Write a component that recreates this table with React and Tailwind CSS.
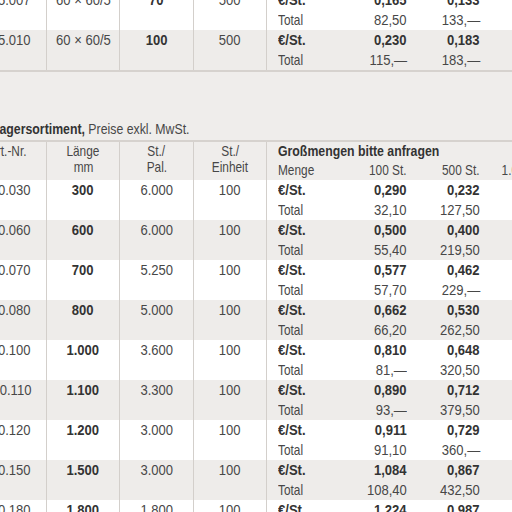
import React from "react";

const font = { fontFamily: "'Liberation Sans', Arial, sans-serif" };

const topRows = [
  { nr: "5.007", len: "60 × 60/5", pal: "70", unit: "500", p1: "0,165", p2: "0,133", t1: "82,50", t2: "133,—" },
  { nr: "5.010", len: "60 × 60/5", pal: "100", unit: "500", p1: "0,230", p2: "0,183", t1: "115,—", t2: "183,—" },
];

const rows = [
  { nr: "0.030", len: "300", pal: "6.000", unit: "100", p1: "0,290", p2: "0,232", t1: "32,10", t2: "127,50" },
  { nr: "0.060", len: "600", pal: "6.000", unit: "100", p1: "0,500", p2: "0,400", t1: "55,40", t2: "219,50" },
  { nr: "0.070", len: "700", pal: "5.250", unit: "100", p1: "0,577", p2: "0,462", t1: "57,70", t2: "229,—" },
  { nr: "0.080", len: "800", pal: "5.000", unit: "100", p1: "0,662", p2: "0,530", t1: "66,20", t2: "262,50" },
  { nr: "0.100", len: "1.000", pal: "3.600", unit: "100", p1: "0,810", p2: "0,648", t1: "81,—", t2: "320,50" },
  { nr: "0.110", len: "1.100", pal: "3.300", unit: "100", p1: "0,890", p2: "0,712", t1: "93,—", t2: "379,50" },
  { nr: "0.120", len: "1.200", pal: "3.000", unit: "100", p1: "0,911", p2: "0,729", t1: "91,10", t2: "360,—" },
  { nr: "0.150", len: "1.500", pal: "3.000", unit: "100", p1: "1,084", p2: "0,867", t1: "108,40", t2: "432,50" },
  { nr: "0.180", len: "1.800", pal: "1.800", unit: "100", p1: "1,224", p2: "0,987", t1: "122,40", t2: "493,50" },
];

// condensed look: Arial squeezed sideways (numbers a bit wider than words)
function T({ a = "l", n, h, children }) {
  const origin = a === "r" ? "origin-right" : a === "c" ? "origin-center" : "origin-left";
  const sx = n ? "scale-x-[0.87]" : h ? "scale-x-[0.82]" : "scale-x-[0.79]";
  return <span className={`inline-block whitespace-nowrap ${sx} ${origin}`}>{children}</span>;
}

function PriceBlock({ p1, p2, t1, t2 }) {
  return (
    <div className="flex flex-col">
      <div className="flex font-bold text-[#333]">
        <div className="w-[67px] pl-[11px]"><T n>€/St.</T></div>
        <div className="w-[73px] text-right"><T a="r" n>{p1}</T></div>
        <div className="w-[73px] text-right"><T a="r" n>{p2}</T></div>
      </div>
      <div className="flex">
        <div className="w-[67px] pl-[11px]"><T>Total</T></div>
        <div className="w-[73px] text-right"><T a="r" n>{t1}</T></div>
        <div className="w-[73px] text-right"><T a="r" n>{t2}</T></div>
      </div>
    </div>
  );
}

function Row({ r, grey, top }) {
  return (
    <div className={`flex h-[40px] ${grey ? "bg-[#eeecea]" : "bg-white"}`}>
      <div className="w-[47px] shrink-0 overflow-hidden border-r border-[#d3cfcb] flex justify-end pr-[15px]"><T a="r" n>{r.nr}</T></div>
      <div className={`w-[73px] shrink-0 border-r border-[#d3cfcb] text-center ${top ? "" : "font-bold text-[#333]"}`}><T a="c" n>{r.len}</T></div>
      <div className={`w-[74px] shrink-0 border-r border-[#d3cfcb] text-center ${top ? "font-bold text-[#333]" : ""}`}><T a="c" n>{r.pal}</T></div>
      <div className="w-[73px] shrink-0 border-r border-[#d3cfcb] text-center"><T a="c" n>{r.unit}</T></div>
      <PriceBlock {...r} />
    </div>
  );
}

export default function App() {
  return (
    <div className="w-[512px] h-[512px] overflow-hidden bg-[#efedeb] text-[15px] leading-[20px] text-[#474747]" style={font}>
      <div className="-mt-[10px] w-[700px]">
        {topRows.map((r, i) => (
          <Row key={r.nr} r={r} grey={i % 2 === 1} top />
        ))}
        <div className="h-[2px] bg-[#d6d2ce]"></div>

        <div className="h-[46px]"></div>
        <div className="h-[22px] leading-[22px] -ml-[8px]">
          <T h><span className="font-bold text-[#333]">Lagersortiment,</span> Preise exkl. MwSt.</T>
        </div>
        <div className="h-[2px] bg-[#d6d2ce]"></div>

        <div className="flex h-[38px] leading-[16px]">
          <div className="w-[47px] shrink-0 overflow-hidden border-r border-[#d3cfcb] flex justify-end pr-[20px] pt-[1px]"><T a="r">Art.-Nr.</T></div>
          <div className="w-[73px] shrink-0 border-r border-[#d3cfcb] text-center pt-[1px]">
            <div><T a="c">Länge</T></div>
            <div><T a="c">mm</T></div>
          </div>
          <div className="w-[74px] shrink-0 border-r border-[#d3cfcb] text-center pt-[1px]">
            <div><T a="c">St./</T></div>
            <div><T a="c">Pal.</T></div>
          </div>
          <div className="w-[73px] shrink-0 border-r border-[#d3cfcb] text-center pt-[1px]">
            <div><T a="c">St./</T></div>
            <div><T a="c">Einheit</T></div>
          </div>
          <div className="flex flex-col">
            <div className="pl-[11px] font-bold text-[#333] leading-[18px]"><T h>Großmengen bitte anfragen</T></div>
            <div className="flex leading-[19px]">
              <div className="w-[67px] pl-[11px]"><T>Menge</T></div>
              <div className="w-[73px] text-right"><T a="r">100 St.</T></div>
              <div className="w-[73px] text-right"><T a="r">500 St.</T></div>
              <div className="w-[69px] text-right"><T a="r">1.000 St.</T></div>
            </div>
          </div>
        </div>

        {rows.map((r, i) => (
          <Row key={r.nr} r={r} grey={i % 2 === 1} />
        ))}
      </div>
    </div>
  );
}
